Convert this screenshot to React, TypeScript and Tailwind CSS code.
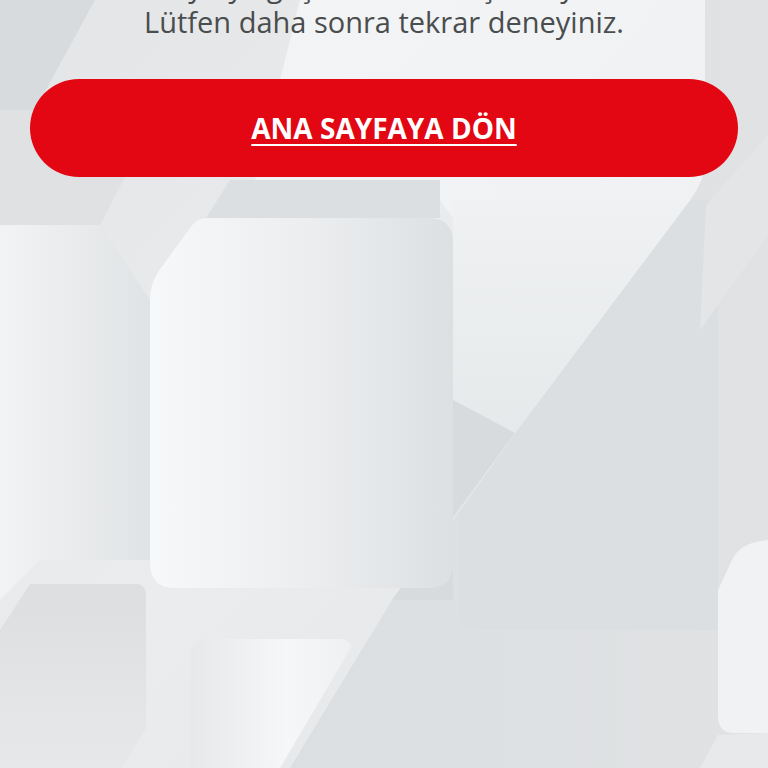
import React from "react";

function Background() {
  return (
    <svg
      className="absolute inset-0 h-full w-full"
      viewBox="0 0 768 768"
      preserveAspectRatio="none"
    >
      <defs>
        <linearGradient id="base" x1="0" y1="0" x2="1" y2="1">
          <stop offset="0" stopColor="#e3e5e7" />
          <stop offset="0.5" stopColor="#eaecee" />
          <stop offset="1" stopColor="#e2e4e6" />
        </linearGradient>
        <linearGradient id="bigRect" x1="0" y1="0" x2="1" y2="0">
          <stop offset="0" stopColor="#f7f8f9" />
          <stop offset="0.5" stopColor="#eceef0" />
          <stop offset="1" stopColor="#dde0e2" />
        </linearGradient>
        <linearGradient id="rightDark" x1="0" y1="0" x2="1" y2="0">
          <stop offset="0" stopColor="#dcdfe1" />
          <stop offset="1" stopColor="#e0e2e4" />
        </linearGradient>
        <linearGradient id="lightBand" x1="0" y1="0" x2="1" y2="1">
          <stop offset="0" stopColor="#f3f4f5" />
          <stop offset="1" stopColor="#eef0f1" />
        </linearGradient>
        <linearGradient id="diagBand" x1="0" y1="0" x2="0" y2="1">
          <stop offset="0" stopColor="#eff1f2" />
          <stop offset="1" stopColor="#e3e6e8" />
        </linearGradient>
        <linearGradient id="leftGlow" x1="0" y1="0" x2="1" y2="0">
          <stop offset="0" stopColor="#f2f3f4" />
          <stop offset="1" stopColor="#e0e3e5" />
        </linearGradient>
        <linearGradient id="blRect" x1="0" y1="0" x2="0" y2="1">
          <stop offset="0" stopColor="#dcdee0" />
          <stop offset="1" stopColor="#e6e8ea" />
        </linearGradient>
        <linearGradient id="bmRect" x1="0" y1="0" x2="1" y2="0">
          <stop offset="0" stopColor="#e6e8ea" />
          <stop offset="0.6" stopColor="#f6f7f8" />
          <stop offset="1" stopColor="#eef0f1" />
        </linearGradient>
      </defs>

      <rect x="0" y="0" width="768" height="768" fill="url(#base)" />

      {/* top-left dark wedge */}
      <polygon points="0,0 95,0 35,110 0,110" fill="#d8dbdd" />
      {/* upper-left medium block */}
      <polygon points="0,110 160,110 100,225 0,225" fill="#dfe1e3" />

      {/* left light area */}
      <polygon points="0,225 100,225 150,300 150,560 40,560 0,600" fill="url(#leftGlow)" />

      {/* right dark region */}
      <path
        d="M705,0 L768,0 L768,768 L290,768 L392,600 L515,433 L690,200 Q705,180 705,160 Z"
        fill="url(#rightDark)"
      />

      {/* rect inside right region (bottom edge visible) */}
      <path
        d="M458,200 L458,612 Q458,630 476,630 L718,630 L718,200 Z"
        fill="#dcdfe1"
      />
      {/* light strip top right */}
      <polygon points="768,135 768,235 700,330 706,205" fill="#e3e5e7" />

      {/* top light zone + diagonal band */}
      <path
        d="M300,0 L705,0 L705,160 Q705,180 690,200 L515,433 L453,520 L453,218 L440,200 L250,200 Z"
        fill="url(#lightBand)"
      />
      <polygon points="453,200 690,200 515,433 453,520" fill="url(#diagBand)" />
      {/* shadow right of big rect */}
      <polygon points="453,400 515,433 392,600 453,600" fill="#d8dbdd" />

      {/* far right light rect */}
      <path
        d="M732,560 Q740,542 768,540 L768,733 L734,733 Q718,733 718,716 L718,590 Z"
        fill="#f1f2f3"
      />
      <polygon points="768,733 768,768 700,768 718,735" fill="#e7e9eb" />

      {/* above big rect darker band */}
      <polygon points="230,180 440,180 440,218 206,218" fill="#dcdfe1" />

      {/* big rect */}
      <path
        d="M206,218 L428,218 Q453,218 453,243 L453,563 Q453,588 428,588 L175,588 Q150,588 150,563 L150,300 Q150,285 158,272 L190,228 Q197,218 206,218 Z"
        fill="url(#bigRect)"
      />

      {/* bottom-left dark rect */}
      <path
        d="M30,584 L136,584 Q146,584 146,596 L146,728 L122,768 L0,768 L0,630 Z"
        fill="url(#blRect)"
      />

      {/* bottom-middle light rect */}
      <path
        d="M206,639 L345,639 L352,646 L280,768 L190,768 L190,660 Q190,639 206,639 Z"
        fill="url(#bmRect)"
      />
    </svg>
  );
}

export default function App() {
  return (
    <div className="relative h-[768px] w-full overflow-hidden bg-[#e6e8ea]">
      <Background />
      <div className="relative flex flex-col items-center">
        <div
          className="mt-[-32px] flex flex-col items-center text-center text-[29px] leading-[36px] text-[#4a4d4e]"
          style={{ fontFamily: '"Open Sans", "Noto Sans", sans-serif' }}
        >
          <p>Sayfaya geçici olarak ulaşılamıyor.</p>
          <p>Lütfen daha sonra tekrar deneyiniz.</p>
        </div>
        <div className="mt-[39px] w-full px-[30px]">
          <button
            className="flex h-[98px] w-full items-center justify-center rounded-full bg-[#e30613] text-[28px] font-bold text-white underline decoration-2 underline-offset-[5px]"
            style={{ fontFamily: '"Open Sans", "Noto Sans", sans-serif' }}
          >
            ANA SAYFAYA DÖN
          </button>
        </div>
      </div>
    </div>
  );
}
